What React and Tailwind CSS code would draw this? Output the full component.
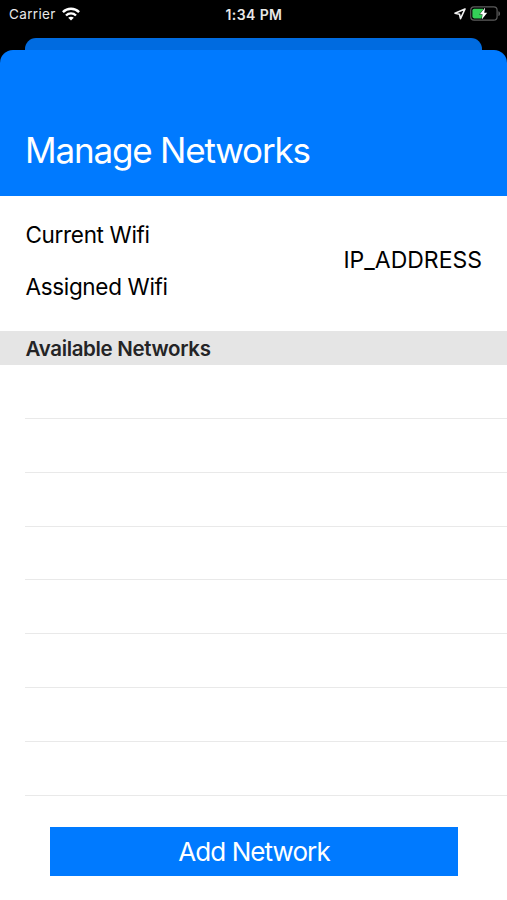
const networkRows = Array.from({ length: 8 }, (_, i) => i);

function WifiIcon() {
  return (
    <svg className="w-[18px] h-[14px]" viewBox="0 0 18 14" fill="none" stroke="#fff" strokeWidth="2.4">
      <path d="M0.9 5.1C5.4 0.6 12.6 0.6 17.1 5.1" />
      <path d="M4 8.5C6.8 5.7 11.2 5.7 14 8.5" />
      <path d="M9 13.6L6.2 10.8C7.8 9.3 10.2 9.3 11.8 10.8Z" fill="#fff" stroke="none" />
    </svg>
  );
}

function LocationIcon() {
  return (
    <svg className="w-3 h-3" viewBox="0 0 12 12" fill="none" stroke="#f2f2f2" strokeWidth="1.6" strokeLinejoin="round">
      <path d="M11 1L1 5.2L5.5 6.2L6.5 10.6Z" />
    </svg>
  );
}

function BatteryIcon() {
  return (
    <svg className="w-[31px] h-4" viewBox="0 0 31 16">
      <rect x="0.7" y="0.8" width="26.4" height="13.4" rx="3.4" fill="none" stroke="#5c5c5c" strokeWidth="1.2" />
      <path d="M28.4 5.2C30.6 5.8 30.6 9.4 28.4 10Z" fill="#5c5c5c" />
      <path d="M4.2 2.7H13V12.4H4.2Q2.4 12.4 2.4 10.6V4.5Q2.4 2.7 4.2 2.7Z" fill="#34d058" />
      <path d="M15.2 1.6L9.8 8.3H12.6L11.8 13.4L17.2 6.7H14.2Z" fill="#fff" stroke="#000" strokeWidth="0.8" paintOrder="stroke" />
    </svg>
  );
}

function StatusBar() {
  return (
    <div className="grid grid-cols-3 items-center h-[27px] pl-[9px] pr-[6px] text-[#e8e8e8] text-[13.5px] leading-[27px]">
      <div className="flex items-center gap-[6px]">
        <span className="w-[47px] pt-px whitespace-nowrap tracking-[0.35px]">Carrier</span>
        <WifiIcon />
      </div>
      <div className="pt-px pr-[2px] text-center text-[14px] font-semibold tracking-[0.4px]">1:34 PM</div>
      <div className="flex items-center justify-end gap-[4px]">
        <LocationIcon />
        <BatteryIcon />
      </div>
    </div>
  );
}

function App() {
  return (
    <div className="w-[507px] h-[900px] overflow-hidden bg-black font-['Inter','Liberation_Sans',sans-serif]">
      <StatusBar />

      {/* Edge of the sheet behind the current one */}
      <div className="mt-[11px] mx-[25px] h-[12px] rounded-t-[11px] bg-[#006be0]" />

      <header className="h-[146px] pt-[79px] pl-[25px] rounded-t-[13px] bg-[#007aff]">
        <h1 className="text-[35px] leading-[42px] text-white tracking-[-1.18px]">Manage Networks</h1>
      </header>

      <main className="flex flex-col h-[704px] bg-white">
        <section className="flex items-start justify-between h-[135px] pl-[25.5px] pr-[25px] pt-[24px] text-[22.5px] leading-[30px] text-black">
          <div className="flex flex-col gap-[22px] tracking-[-0.33px]">
            <p>Current Wifi</p>
            <p>Assigned Wifi</p>
          </div>
          <p className="mt-[25px] text-[23px]">IP_ADDRESS</p>
        </section>

        <h2 className="h-[34px] pl-[25.5px] bg-[#e5e5e5] text-[#242426] text-[20.5px] leading-[36px] font-semibold tracking-[-0.34px]">
          Available Networks
        </h2>

        <ul className="pt-[0.2px] pl-[25px]">
          {networkRows.map((row) => (
            <li key={row} className="h-[53.8px] border-b border-[#e9e9e9]" />
          ))}
        </ul>

        <button className="mt-[31.4px] ml-[50px] w-[408px] h-[49px] shrink-0 bg-[#007aff] text-white text-[26px] leading-[49px] tracking-[-0.92px]">
          Add Network
        </button>
      </main>
    </div>
  );
}

export default App;
